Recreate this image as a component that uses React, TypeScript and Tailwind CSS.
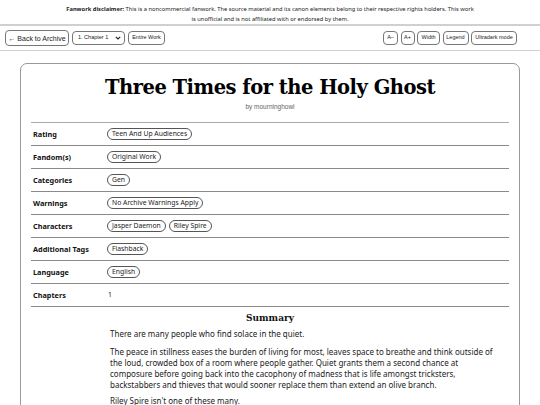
import React from "react";

const sans = { fontFamily: '"Noto Sans", sans-serif' };
const arial = { fontFamily: '"Liberation Sans", Arial, sans-serif' };

function Tag({ children }: { children: React.ReactNode }) {
  return (
    <span className="inline-flex items-center h-[12px] px-[4px] rounded-full border border-[#555] text-[6.8px] leading-none text-[#222]">
      {children}
    </span>
  );
}

function Row({ label, children }: { label: string; children: React.ReactNode }) {
  return (
    <div className="flex items-center h-[23px] border-b border-[#8a8a8a]">
      <div className="w-[76px] pl-[2px] text-[7.3px] font-bold text-[#111]">{label}</div>
      <div className="flex items-center gap-[3px] text-[7px] text-[#222]">{children}</div>
    </div>
  );
}

function SmallBtn({ w, children }: { w: string; children: React.ReactNode }) {
  return (
    <button className={`${w} h-[14px] rounded-[4px] border border-[#777] bg-white text-[5.5px] leading-none text-[#222] flex items-center justify-center`} style={arial}>
      {children}
    </button>
  );
}

export default function App() {
  return (
    <div className="w-[540px] h-[405px] overflow-hidden bg-white text-[#222]" style={sans}>
      <div className="h-[24px] pt-[4px] text-center text-[5.75px] leading-[10px] text-[#222]">
        <b>Fanwork disclaimer:</b> This is a noncommercial fanwork. The source material and its canon elements belong to their respective rights holders. This work
        <br />
        is unofficial and is not affiliated with or endorsed by them.
      </div>
      <div className="box-border h-[27px] border-t-2 border-b border-[#d0d0d0] flex items-center justify-between px-[5px]">
        <div className="flex items-center gap-[3px]" style={arial}>
          <button className="w-[64px] h-[16px] rounded-[4px] border border-[#777] bg-white text-[7px] leading-none text-[#222] flex items-center justify-center">
            ← Back to Archive
          </button>
          <div className="h-[14px] w-[53px] pl-[5px] pr-[3px] rounded-[4px] border border-[#777] bg-white flex items-center justify-between text-[5.5px] leading-none text-[#222]">
            <span>1. Chapter 1</span>
            <svg width="6" height="4" viewBox="0 0 6 4"><path d="M0.8 0.8 L3 3 L5.2 0.8" fill="none" stroke="#222" strokeWidth="1.1" /></svg>
          </div>
          <SmallBtn w="w-[37px]">Entire Work</SmallBtn>
        </div>
        <div className="flex items-center gap-[2.5px] pr-[18px]">
          <SmallBtn w="w-[15px]">A–</SmallBtn>
          <SmallBtn w="w-[14px]">A+</SmallBtn>
          <SmallBtn w="w-[23px]">Width</SmallBtn>
          <SmallBtn w="w-[26px]">Legend</SmallBtn>
          <SmallBtn w="w-[46px]">Ultradark mode</SmallBtn>
        </div>
      </div>
      <div className="mx-[20px] mt-[12px] border border-[#999] rounded-t-[7px] px-[10px] h-[400px]">
        <h1 className="pt-[11px] text-center text-[19.5px] leading-[26px] font-bold text-black tracking-[-0.5px]" style={{ fontFamily: '"DejaVu Serif", Georgia, serif' }}>
          Three Times for the Holy Ghost
        </h1>
        <div className="text-center text-[6.5px] leading-[10px] text-[#666] mt-[1px]" style={arial}>
          by mourninghowl
        </div>
        <div className="mt-[10px] border-t border-[#aaa]">
          <Row label="Rating"><Tag>Teen And Up Audiences</Tag></Row>
          <Row label="Fandom(s)"><Tag>Original Work</Tag></Row>
          <Row label="Categories"><Tag>Gen</Tag></Row>
          <Row label="Warnings"><Tag>No Archive Warnings Apply</Tag></Row>
          <Row label="Characters"><Tag>Jasper Daemon</Tag><Tag>Riley Spire</Tag></Row>
          <Row label="Additional Tags"><Tag>Flashback</Tag></Row>
          <Row label="Language"><Tag>English</Tag></Row>
          <Row label="Chapters"><span className="pl-[1px]">1</span></Row>
        </div>
        <div className="mt-[5px] text-center text-[9px] leading-[12px] font-bold text-[#111]" style={{ fontFamily: '"DejaVu Serif", Georgia, serif' }}>
          Summary
        </div>
        <div className="ml-[79px] w-[390px] text-[8px] leading-[11px] text-[#222] mt-[4px]">
          <p>There are many people who find solace in the quiet.</p>
          <p className="mt-[7px]">
            The peace in stillness eases the burden of living for most, leaves space to breathe and think outside of the loud, crowded box of a room where people gather. Quiet grants them a second chance at composure before going back into the cacophony of madness that is life amongst tricksters, backstabbers and thieves that would sooner replace them than extend an olive branch.
          </p>
          <p className="mt-[5px]">Riley Spire isn't one of these many.</p>
        </div>
      </div>
    </div>
  );
}
